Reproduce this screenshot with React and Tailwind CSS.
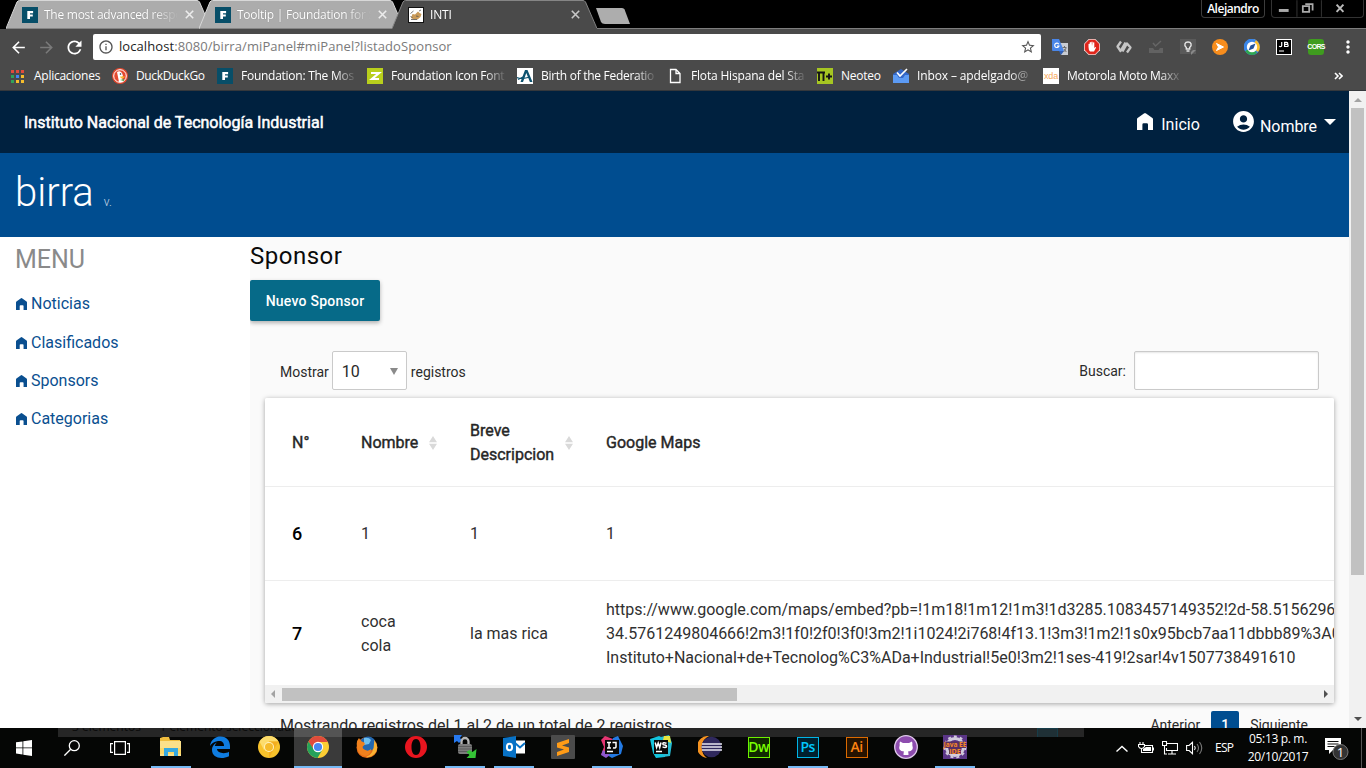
import React from "react";
import { MdAccountCircle, MdArrowBack, MdArrowForward, MdRefresh, MdInfoOutline, MdStarBorder, MdMoreVert } from "react-icons/md";

/* ---------- Shared glyphs ---------- */

function House({ className }) {
  return (
    <svg viewBox="0 0 16 17" className={className} fill="currentColor" preserveAspectRatio="none">
      <path d="M0 6.200Q0 5.500.6 5L7.300.3Q8 0 8.700.3L15.400 5Q16 5.500 16 6.200V17h-5v-5.500a1.200 1.200 0 0 0-1.200-1.200H6.600a1.200 1.200 0 0 0-1.200 1.200V17H0z" />
    </svg>
  );
}

function FoundationIcon() {
  return (
    <svg viewBox="0 0 16 16" className="size-4 shrink-0">
      <rect width="16" height="16" fill="#074e68" />
      <path d="M5.300 4h5.800v2.200H8v1.300h2.800v2.100H8V12H5.300z" fill="#fff" />
    </svg>
  );
}

/* ---------- Browser tabs ---------- */

function Tab({ icon, title, active, titleClass }) {
  return (
    <div className={active ? "relative z-10 flex h-[29px] w-[205px] shrink-0 items-center pl-4" : "relative -mr-3 flex h-[29px] w-[205px] shrink-0 items-center pl-4"}>
      <svg viewBox="0 0 205 29" className="absolute inset-0 h-[29px] w-[205px]">
        <path d="M0 29 11 2Q12 .5 13.500.5H191Q192.500.5 193.500 2L205 29z" fill={active ? "#4a4a4a" : "#acacac"} />
        <path d="M0 28.500 11 2Q12 .5 13.500.5H191Q192.500.5 193.500 2L205 28.500" fill="none" stroke={active ? "#858585" : "#d8d8d8"} />
        {!active && <path d="M1 28.500H204" stroke="#858585" />}
      </svg>
      <span className="relative">{icon}</span>
      <span className="relative ml-[6px] w-[140px] overflow-hidden whitespace-nowrap [mask-image:linear-gradient(90deg,#000_108px,transparent_134px)]">
        <span className={titleClass}>{title}</span>
      </span>
      <svg viewBox="0 0 9 9" className={active ? "relative ml-[1px] size-[9px] text-[#c8c8c8]" : "relative ml-[1px] size-[9px] text-[#ececec]"} fill="none" stroke="currentColor" strokeWidth="1.600">
        <path d="m.8.8 7.400 7.400M8.200.8.800 8.200" />
      </svg>
    </div>
  );
}

function TabStrip() {
  return (
    <div className="flex h-[29px] bg-black pl-[6px]">
      <Tab icon={<FoundationIcon />} title="The most advanced respo" titleClass="text-white [text-shadow:0_0_1px_#777] tracking-[-0.260px]" />
      <Tab icon={<FoundationIcon />} title="Tooltip | Foundation for S" titleClass="text-white [text-shadow:0_0_1px_#777] tracking-[-0.260px]" />
      <Tab
        active
        title="INTI"
        titleClass="text-white tracking-[-0.200px]"
        icon={
          <svg viewBox="0 0 16 16" className="size-4">
            <rect x=".5" y=".5" width="15" height="15" fill="#fff" stroke="#111" />
            <path d="M3 11 4.500 7 7 7.500 10 4.500l1.500 1.500 2 1-1 3-3 2.500H6z" fill="#c99a58" />
            <path d="M2.500 6.500 5.500 4M3 12.500h6M11 4l2-1M8 9l2.500.5M2.500 9.500l2 1" stroke="#555" strokeWidth=".8" />
          </svg>
        }
      />
      <div className="relative flex grow justify-between">
        <svg viewBox="0 0 36 18" className="-ml-[3px] mt-[7px] h-[18px] w-9">
          <path d="M2 1h26q2 0 2.600 1.500L36 17H11q-3 0-4-2z" fill="#adadad" />
        </svg>
        <div className="flex h-[18px] items-start">
          <div className="mr-[6px] flex h-[18px] w-[64px] items-center justify-center rounded-b border border-t-0 border-[#3c3c3c] text-[12px] font-semibold tracking-[-0.500px] text-white">Alejandro</div>
          <div className="mr-[2px] flex h-[18px] w-[93px] rounded-b border border-t-0 border-[#333]">
            <svg viewBox="0 0 93 18" className="h-[18px] w-[93px]" fill="none">
              <path d="M25.500 0v17M50.500 0v17" stroke="#333" />
              <path d="M7 10.500h10" stroke="#aaa" strokeWidth="3" />
              <path d="M33 4.500h7.500V11M30.500 6.500h6.500v6h-6.500z" stroke="#aaa" strokeWidth="1.800" transform="translate(1 -.5)" />
              <path d="m66 4.500 7 7.500M73 4.500l-7 7.500" stroke="#bbb" strokeWidth="2" />
            </svg>
          </div>
        </div>
        <div className="absolute bottom-0 left-0 h-px w-full bg-[#7d7d7d]" />
      </div>
    </div>
  );
}

/* ---------- Address bar ---------- */

const extensions = [
  <svg key="translate" viewBox="0 0 16 16" className="size-4">
    <path d="M7 4h9v12H9z" fill="#c9ccd2" />
    <path d="M0 0h7l5 12H1a1 1 0 0 1-1-1z" fill="#4a86e8" />
    <path d="M7 12h5l-3 4z" fill="#2f5fb8" />
    <path d="M6.800 5.200A2.200 2.200 0 1 0 7 7H5" fill="none" stroke="#fff" strokeWidth="1.100" />
    <path d="M10.500 8.500h4M12.500 7v1.500M14 9c-.500 2-1.500 3-2.500 4M12 10l2.300 3" stroke="#666" strokeWidth=".9" fill="none" />
  </svg>,
  <svg key="block" viewBox="0 0 16 16" className="size-4">
    <path d="M4.700 0h6.600L16 4.700v6.600L11.300 16H4.700L0 11.300V4.700z" fill="#f3d9d7" />
    <path d="M5 .8h6L15.200 5v6L11 15.200H5L.8 11V5z" fill="#e0251b" />
    <path d="M4.500 8V5q.8-.7 1.200 0v2.500V3.500q.8-.8 1.300 0V7l.3-4q.8-.8 1.300 0V7l.5-3.500q.8-.6 1.200 0V9l1.200-1q.8 0 .5.700L10 12.500H6Q4.500 11 4.500 8z" fill="#fff" />
  </svg>,
  <svg key="waves" viewBox="0 0 16 16" className="size-4" fill="none" stroke="#c6c6c6" strokeWidth="2.300" strokeLinejoin="round">
    <path d="M5 2.500 1.500 7.500 4.500 12 9.500 3.500M6.500 12.500 11 4.500l3.500 4L11 13.500" />
  </svg>,
  <svg key="inbox" viewBox="0 0 16 16" className="size-4">
    <path d="M1 9h4l1.500 2h4L12 9h3v5H1z" fill="#626262" />
    <path d="m5 4 2.500 3L13 2" fill="none" stroke="#666" strokeWidth="1.500" />
  </svg>,
  <svg key="bulb" viewBox="0 0 16 16" className="size-4">
    <rect x="0" y="0" width="16" height="15" fill="#5a5a5a" />
    <path d="M6.300 10V8.500C3.500 6 5 3 8 3s4.500 3 1.700 5.500V10zM6.500 12h3" stroke="#e8e8e8" strokeWidth="1.400" fill="none" />
    <path d="m16 11-5 5v-3l2-2z" fill="#888" />
  </svg>,
  <svg key="arrow" viewBox="0 0 16 16" className="size-4">
    <circle cx="8" cy="8" r="8" fill="#f78d1d" />
    <path d="m4.500 4.500 7 3.500-7 3.500 2-3.500z" fill="#fff" stroke="#fff" />
  </svg>,
  <svg key="compass" viewBox="0 0 16 16" className="size-4">
    <circle cx="8" cy="8" r="8" fill="#3a86e8" />
    <path d="M8 0a8 8 0 0 1 6 13L8 8z" fill="#fbc02d" />
    <path d="M1 12a8 8 0 0 0 12 2L8 8z" fill="#2fa84f" />
    <path d="M12 1A8 8 0 0 0 1 12l7-4z" fill="#3a86e8" />
    <circle cx="8" cy="8" r="5.200" fill="#fff" />
    <path d="m4.500 11.500 2-5 5-2-2 5z" fill="#20529b" />
  </svg>,
  <svg key="jb" viewBox="0 0 16 16" className="size-4">
    <rect x=".5" y=".5" width="15" height="15" fill="#000" stroke="#fff" />
    <path d="M5.700 3v3.500q0 1.200-1.200 1.200-.9 0-1.300-.7M8.600 3.400h2q1.200 0 1.200 1t-1.200 1h-2 2.400q1.200 0 1.200 1.100T11 7.500H8.600zM3 12h5" fill="none" stroke="#fff" strokeWidth="1.200" />
  </svg>,
  <div key="cors" className="flex size-4 items-center justify-center rounded-[3px] bg-[#3f9c1f] font-['Liberation_Sans',sans-serif] text-[7px] font-bold leading-4 tracking-[-0.700px] text-white">CORS</div>,
];

function Toolbar() {
  return (
    <div className="flex h-[36px] items-center bg-[#4a4a4a] pl-[9px] text-white">
      <MdArrowBack className="size-[19px]" />
      <MdArrowForward className="ml-[9px] size-[19px] text-[#7a7a7a]" />
      <MdRefresh className="ml-[8px] mr-[8px] size-[21px]" />
      <div className="flex h-[26px] w-[948px] items-center rounded-[2px] bg-white pl-[5px] text-[#555]">
        <MdInfoOutline className="size-4" />
        <span className="ml-[5px] grow text-[13px] tracking-[0.080px] text-[#7a7a7a]">
          <span className="text-[#1c1c1c]">localhost</span>:8080/birra/miPanel#miPanel?listadoSponsor
        </span>
        <MdStarBorder className="mr-[5px] size-4" />
      </div>
      <div className="ml-[11px] flex gap-4">{extensions}</div>
      <MdMoreVert className="ml-[14px] size-5" />
    </div>
  );
}

/* ---------- Bookmarks ---------- */

function Bookmark({ icon, label, boxClass, textClass }) {
  return (
    <div className={boxClass}>
      {icon}
      <span className={textClass}>{label}</span>
    </div>
  );
}

const appsColors = ["#e24a3b", "#e24a3b", "#e24a3b", "#2fa35a", "#4285f4", "#f6bd2c", "#2fa35a", "#f6bd2c", "#f6bd2c"];

function Bookmarks() {
  return (
    <div className="flex h-[26px] items-center border-b border-[#35383c] bg-[#4a4a4a] pl-[11px] pb-[5px] pt-[2px] text-white">
      <Bookmark
        boxClass="flex w-[101px] shrink-0 items-center"
        textClass="ml-[10px] whitespace-nowrap tracking-[-0.260px]"
        label="Aplicaciones"
        icon={
          <svg viewBox="0 0 13 13" className="size-[13px] shrink-0">
            {appsColors.map((c, i) => (
              <rect key={i} x={(i % 3) * 5} y={Math.floor(i / 3) * 5} width="3" height="3" fill={c} />
            ))}
          </svg>
        }
      />
      <Bookmark
        boxClass="flex w-[105px] shrink-0 items-center"
        textClass="ml-2 whitespace-nowrap tracking-[-0.350px]"
        label="DuckDuckGo"
        icon={
          <svg viewBox="0 0 16 16" className="size-4 shrink-0">
            <circle cx="8" cy="8" r="8" fill="#e5492f" />
            <circle cx="8" cy="8" r="6.300" fill="none" stroke="#fff" strokeWidth="1" />
            <path d="M5 4q3-2 5 1l1 3-1 1 1 5H7z" fill="#fff" />
            <path d="M8 8.500h5q-1 2-4 2z" fill="#fbc02d" />
            <path d="m8 12 4 1v-2z" fill="#4caf50" />
            <circle cx="8.500" cy="6" r=".8" fill="#234" />
          </svg>
        }
      />
      <Bookmark boxClass="flex w-[150px] shrink-0 items-center" textClass="ml-2 w-[116px] overflow-hidden whitespace-nowrap tracking-[-0.260px] [mask-image:linear-gradient(90deg,#000_94px,transparent_116px)]" label="Foundation: The Mos" icon={<FoundationIcon />} />
      <Bookmark
        boxClass="flex w-[150px] shrink-0 items-center"
        textClass="ml-2 w-[116px] overflow-hidden whitespace-nowrap tracking-[-0.290px] [mask-image:linear-gradient(90deg,#000_94px,transparent_116px)]"
        label="Foundation Icon Font"
        icon={
          <svg viewBox="0 0 16 16" className="size-4 shrink-0">
            <rect width="16" height="16" fill="#b9cf1c" />
            <path d="M4 5h8L5 11h7" fill="none" stroke="#fff" strokeWidth="2.200" />
          </svg>
        }
      />
      <Bookmark
        boxClass="flex w-[150px] shrink-0 items-center"
        textClass="ml-2 w-[116px] overflow-hidden whitespace-nowrap tracking-[-0.290px] [mask-image:linear-gradient(90deg,#000_94px,transparent_116px)]"
        label="Birth of the Federatio"
        icon={
          <svg viewBox="0 0 16 16" className="size-4 shrink-0">
            <rect width="16" height="16" fill="#fff" />
            <path d="m3.500 14 4.500-12h2.500l5 12h-2.600L9.300 5 6 14z" fill="#0d5370" />
            <path d="M0 9.500q5 2 13-.5M1 11.500 6 9" stroke="#0d5370" strokeWidth="1.300" fill="none" />
          </svg>
        }
      />
      <Bookmark
        boxClass="flex w-[150px] shrink-0 items-center"
        textClass="ml-2 w-[116px] overflow-hidden whitespace-nowrap tracking-[-0.180px] [mask-image:linear-gradient(90deg,#000_94px,transparent_116px)]"
        label="Flota Hispana del Sta"
        icon={
          <svg viewBox="0 0 16 16" className="size-4 shrink-0" fill="none" stroke="#fff" strokeWidth="1.300">
            <path d="M3.500 1.500h5.500l4 4v9H3.500zM9 1.500v4h4" />
          </svg>
        }
      />
      <Bookmark
        boxClass="flex w-[76px] shrink-0 items-center"
        textClass="ml-2 whitespace-nowrap tracking-[-0.260px]"
        label="Neoteo"
        icon={
          <svg viewBox="0 0 16 16" className="size-4 shrink-0">
            <rect width="16" height="16" fill="#a6c622" />
            <path d="M2 13V4.500h4.500V13M0 4.500h8M9 8.500h6M12 5.500v6" fill="none" stroke="#151515" strokeWidth="1.900" />
          </svg>
        }
      />
      <Bookmark
        boxClass="flex w-[150px] shrink-0 items-center"
        textClass="ml-2 w-[118px] overflow-hidden whitespace-nowrap tracking-[-0.130px] [mask-image:linear-gradient(90deg,#000_92px,transparent_118px)]"
        label="Inbox – apdelgado@"
        icon={
          <svg viewBox="0 0 16 16" className="size-4 shrink-0">
            <path d="m0 6 8-5 8 5v9H0z" fill="#3367c8" />
            <path d="M0 7h4l2 3h4l2-3h4v8H0z" fill="#5c9bf5" />
            <path d="m4 4.500 3 3.500 7-7" fill="none" stroke="#fff" strokeWidth="1.700" />
          </svg>
        }
      />
      <Bookmark
        boxClass="flex w-[150px] shrink-0 items-center"
        textClass="ml-2 w-[118px] overflow-hidden whitespace-nowrap tracking-[-0.290px] [mask-image:linear-gradient(90deg,#000_92px,transparent_116px)]"
        label="Motorola Moto Maxx"
        icon={<div className="flex size-4 shrink-0 items-center justify-center bg-white font-['Liberation_Sans',sans-serif] text-[9px] leading-4 tracking-[-0.200px] text-[#f7a85b]">xda</div>}
      />
      <svg viewBox="0 0 9 8" className="ml-auto mr-[23px] h-2 w-[9px]" fill="none" stroke="#fff" strokeWidth="1.600">
        <path d="m1 1 3 3-3 3M5 1l3 3-3 3" />
      </svg>
    </div>
  );
}

/* ---------- Page ---------- */

function SiteHeader() {
  return (
    <header>
      <div className="flex h-[62px] items-center bg-[#00213f] pl-6 pr-[13px] text-white">
        <span className="mt-[2px] grow text-[16px] [-webkit-text-stroke:0.500px_#fff]">Instituto Nacional de Tecnología Industrial</span>
        <House className="mb-[1px] h-[17px] w-4" />
        <span className="ml-[8px] mt-[5px] text-[16px] tracking-[0.050px]">Inicio</span>
        <MdAccountCircle className="ml-[31px] mb-px size-[25px]" />
        <span className="ml-[4px] mt-[9px] text-[16px] tracking-[-0.050px]">Nombre</span>
        <svg viewBox="0 0 12 6" className="ml-[7px] h-[6px] w-3">
          <path d="M0 0h12L6 6z" fill="#fff" />
        </svg>
      </div>
      <div className="flex h-[84px] items-baseline bg-[#004d90] pl-[15px] pt-[12px] text-white">
        <span className="text-[40px] font-light leading-[56px]">birra</span>
        <span className="ml-[10px] text-[12px] font-light text-[#c9d8e6]">v.</span>
      </div>
    </header>
  );
}

const menu = ["Noticias", "Clasificados", "Sponsors", "Categorias"];

function Sidebar() {
  return (
    <nav className="w-[250px] shrink-0 bg-white pl-[15px]">
      <h2 className="mt-[5px] text-[25px] leading-[35px] text-[#8a8a8a]">MENU</h2>
      <ul className="mt-[8px] text-[16px] text-[#0a4f90]">
        {menu.map((m) => (
          <li key={m} className="flex h-[38.400px] items-center pl-px">
            <House className="h-3 w-[11px]" />
            <span className="ml-1">{m}</span>
          </li>
        ))}
      </ul>
    </nav>
  );
}

function SortArrows({ className }) {
  return (
    <svg viewBox="0 0 8 14" className={className} fill="#d9d9d9">
      <path d="M4 0l4 6.200H0zM4 14l4-6.200H0z" />
    </svg>
  );
}

const rowGrid = "grid grid-cols-[69px_109px_136px_760px] items-center pl-[27px]";

function SponsorTable() {
  return (
    <div className="h-[305px] w-[1069px] overflow-hidden rounded-[2px] bg-white text-[16px] leading-6 text-[#303030]">
      <div className={rowGrid + " h-[88px] pt-[2px] text-[#262626] [-webkit-text-stroke:0.400px_#262626]"}>
        <span>N°</span>
        <span className="flex items-center">Nombre<SortArrows className="ml-[11px] h-[14px] w-2" /></span>
        <span className="flex items-center">
          <span className="w-[84px]">Breve Descripcion</span>
          <SortArrows className="ml-[11px] h-[14px] w-2" />
        </span>
        <span>Google Maps</span>
      </div>
      <div className={rowGrid + " h-[94px] border-t border-[#ededed]"}>
        <span className="text-[18px] font-medium text-black">6</span>
        <span>1</span>
        <span>1</span>
        <span>1</span>
      </div>
      <div className={rowGrid + " h-[105px] border-t border-[#ededed] pt-px"}>
        <span className="text-[18px] font-medium text-black">7</span>
        <span className="w-10 pt-px">coca cola</span>
        <span className="pt-px">la mas rica</span>
        <span className="whitespace-nowrap pt-px">
          https://www.google.com/maps/embed?pb=!1m18!1m12!1m3!1d3285.1083457149352!2d-58.5156296
          <br />
          34.5761249804666!2m3!1f0!2f0!3f0!3m2!1i1024!2i768!4f13.1!3m3!1m2!1s0x95bcb7aa11dbbb89%3A0
          <br />
          Instituto+Nacional+de+Tecnolog%C3%ADa+Industrial!5e0!3m2!1ses-419!2sar!4v1507738491610
        </span>
      </div>
      <div className="flex h-[18px] items-center bg-[#f1f1f1] px-[6px]">
        <svg viewBox="0 0 4 8" className="h-2 w-1"><path d="M4 0v8L0 4z" fill="#a3a3a3" /></svg>
        <div className="ml-[7px] h-[13px] w-[455px] bg-[#c1c1c1]" />
        <svg viewBox="0 0 4 8" className="ml-auto h-2 w-1"><path d="M0 0v8l4-4z" fill="#505050" /></svg>
      </div>
    </div>
  );
}

function Content() {
  return (
    <main className="flex grow flex-col overflow-hidden bg-[#fafafa] text-[#2a2a2a]">
      <h1 className="mt-px text-[24px] leading-9 tracking-[0.500px] text-[#0a0a0a]">Sponsor</h1>
      <button className="mt-[6px] h-[41px] w-[130px] shrink-0 rounded-[2px] bg-[#066a88] pt-[2px] text-[14px] font-medium tracking-[0.240px] text-white shadow-[0_2px_4px_rgba(0,0,0,0.3)]">Nuevo Sponsor</button>
      <div className="mt-[30px] flex h-[39px] shrink-0 items-center pl-[30px] pr-[30px] text-[14px]">
        <span className="mt-[4px]">Mostrar</span>
        <div className="ml-[3px] flex h-[39px] w-[75px] items-center justify-between rounded-[2px] border border-[#cacaca] bg-white pl-[9px] pr-[8px] pt-[2px] text-[16px]">
          10
          <svg viewBox="0 0 8 7" className="h-[7px] w-2"><path d="M0 0h8L4 7z" fill="#8a8a8a" /></svg>
        </div>
        <span className="ml-1 mt-[4px]">registros</span>
        <span className="ml-auto mt-[2px]">Buscar:</span>
        <div className="ml-2 h-[39px] w-[185px] rounded-[2px] border border-[#cacaca] bg-white shadow-[inset_0_1px_2px_rgba(10,10,10,0.1)]" />
      </div>
      <div className="ml-[15px] mt-2 w-[1069px] rounded-[2px] shadow-[0_1px_5px_rgba(0,0,0,0.35)]">
        <SponsorTable />
      </div>
      <div className="mt-2 flex h-10 shrink-0 items-start pl-[30px] pr-[41px]">
        <span className="mt-[3px] text-[16px]">Mostrando registros del 1 al 2 de un total de 2 registros</span>
        <div className="ml-auto flex items-center text-[14px]">
          <span className="pt-px">Anterior</span>
          <span className="mx-[11px] flex h-[27px] w-7 items-center justify-center rounded-[2px] bg-[#004d90] pt-[2px] font-medium text-white">1</span>
          <span className="pt-px">Siguiente</span>
        </div>
      </div>
    </main>
  );
}

function PageScrollbar() {
  return (
    <div className="flex w-[17px] shrink-0 flex-col items-center bg-[#f1f1f1]">
      <svg viewBox="0 0 8 4" className="mt-[7px] h-1 w-2"><path d="M0 4h8L4 0z" fill="#a3a3a3" /></svg>
      <div className="mt-[6px] h-[467px] w-[13px] bg-[#c1c1c1]" />
      <svg viewBox="0 0 8 4" className="mb-[7px] mt-auto h-1 w-2"><path d="M0 0h8L4 4z" fill="#505050" /></svg>
    </div>
  );
}

/* ---------- Taskbar ---------- */

function AdobeIcon({ label, className }) {
  return <div className={"flex h-[21px] w-[22px] items-center justify-center border-[1.500px] text-[14px] font-semibold leading-none tracking-[-0.700px] " + className}>{label}</div>;
}

const tasks = [
  {
    bar: "w-10",
    icon: (
      <svg viewBox="0 0 24 22" className="h-[22px] w-6">
        <path d="M1 2 4 1h6l1 3h10v3H1z" fill="#f0bd3e" />
        <path d="M1 5h21v15H1z" fill="#fce08a" />
        <path d="M1 12h21v6H1z" fill="#fbd667" />
        <path d="M5 12h14v8h-4v-4H9v4H5z" fill="#36a8e0" />
      </svg>
    ),
  },
  {
    icon: (
      <svg viewBox="0 0 22 22" className="size-[22px]">
        <path d="M1 10C2 3 7 .5 11.500.5 18 .5 21 5 21 10v3H8c.3 4 7.500 5.500 12 2.700v4.500C12 24 3 21.500 3 14c0-4 2.500-6.500 5-7.500-1.200 1-2 2.500-2.200 3.500H15C15 5.500 12 4.500 9 5 5 5.600 2.500 7.500 1 10z" fill="#0f7ce0" fillRule="evenodd" />
        <path d="M8 9.500h6.500Q14 7 11 7T8 9.500z" fill="#050505" />
      </svg>
    ),
  },
  {
    icon: (
      <svg viewBox="0 0 22 22" className="size-[22px]">
        <circle cx="11" cy="11" r="11" fill="#f8c22b" />
        <path d="M11 5.500h9.500A11 11 0 0 0 1.500 5.500L6 14z" fill="#fddc6c" />
        <path d="m11 22 5-9 4.500-7.500H11z" fill="#f4ae20" />
        <circle cx="11" cy="11" r="5" fill="#fff1bc" />
        <circle cx="11" cy="11" r="4" fill="#f6bb2a" />
      </svg>
    ),
  },
  {
    bar: "w-12",
    active: true,
    icon: (
      <svg viewBox="0 0 22 22" className="size-[22px]">
        <circle cx="11" cy="11" r="11" fill="#fccd33" />
        <path d="M11 6h9.800A11 11 0 0 0 1.500 5.500L6.500 14z" fill="#df4b3c" />
        <path d="M1.500 5.500A11 11 0 0 0 10.500 22l5-8.500-9-.5z" fill="#25a15b" />
        <circle cx="11" cy="11" r="5.200" fill="#fff" />
        <circle cx="11" cy="11" r="4.100" fill="#4787f2" />
      </svg>
    ),
  },
  {
    icon: (
      <svg viewBox="0 0 22 22" className="size-[22px]">
        <circle cx="11" cy="11.500" r="10.500" fill="#e66b16" />
        <path d="M5 3.500Q12-2 18 3q4 7-2 11-6 3-10-2z" fill="#2468b0" />
        <path d="M8 2q5-1 7 2l-2 4-5 1z" fill="#6fc0ef" />
        <path d="M.7 8Q1 4 3 2q1 3 4 4 3 1 1 3.500-2 .5-1 3 4 4 8 .5 0 6-6 7-8-1-8.300-12z" fill="#f0811d" />
        <path d="M18 4q5 6 2 12-4 6-10 5 9-3 8-17z" fill="#f9b233" />
      </svg>
    ),
  },
  {
    icon: (
      <svg viewBox="0 0 22 22" className="size-[22px]">
        <path d="M11 0a11 11 0 1 0 0 22 11 11 0 0 0 0-22zm0 3c3 0 4.500 3.500 4.500 8S14 19 11 19s-4.500-3.500-4.500-8S8 3 11 3z" fill="#e8151f" fillRule="evenodd" />
      </svg>
    ),
  },
  {
    bar: "w-10",
    icon: (
      <svg viewBox="0 0 24 24" className="size-6">
        <path d="M1 0h8L7 3l2 2-3 3-2-2-3 2z" fill="#2779ef" />
        <path d="M8.500 10V6.500a3.500 3.500 0 0 1 7 0V10" fill="none" stroke="#b5b5b5" strokeWidth="2.300" />
        <rect x="5" y="9" width="14" height="10" rx="2" fill="#7d7d7d" />
        <path d="M5 11.500h14M5 14h14M5 16.500h14" stroke="#5c5c5c" />
        <path d="m23.500 14-1 9h-9l3-3-3-3 3-2 3 2z" fill="#35c336" />
      </svg>
    ),
  },
  {
    bar: "w-10",
    icon: (
      <svg viewBox="0 0 24 24" className="size-6">
        <path d="M12 5.500h11v13H12z" fill="#fff" />
        <path d="m13 8 5 4.500L23 8" fill="none" stroke="#0872c6" strokeWidth="2" />
        <path d="m1 3 13-2v22L1 21z" fill="#0872c6" />
        <ellipse cx="7.500" cy="12" rx="2.600" ry="3.300" fill="none" stroke="#fff" strokeWidth="2" />
      </svg>
    ),
  },
  {
    icon: (
      <svg viewBox="0 0 24 24" className="size-6">
        <rect width="24" height="24" rx="1" fill="#4b4b4b" />
        <path d="m6 8 12-4v4L11 10.500l7 2V17L6 21v-4l7-2.500-7-2z" fill="#ff9b16" />
      </svg>
    ),
  },
  {
    bar: "w-10",
    icon: (
      <svg viewBox="0 0 24 24" className="size-6">
        <path d="M1 5 5 1l8 3-4 10-8 6 3-8z" fill="#e43572" />
        <path d="m13 3 5-2 5 10-2 8-9 4-5-3z" fill="#237ae4" />
        <path d="m3 15-2 5 5 3 4-3z" fill="#9058ce" />
        <path d="M5 5h14v14H5z" fill="#080808" />
        <path d="M7 7.500h4M9 7.500V13M7 13h4M12.500 7.500H16V12q-.5 1.500-3 .7M7 16.500h6" fill="none" stroke="#fff" strokeWidth="1.500" />
      </svg>
    ),
  },
  {
    icon: (
      <svg viewBox="0 0 24 24" className="size-6">
        <path d="m1 4 9-3 6 3v18l-9 1-3-5z" fill="#13c4dd" />
        <path d="m12 2 8-2 3 8-2 13-7 1z" fill="#26bbd2" />
        <path d="m15 1 6 0 1 7-8-3z" fill="#e9e63e" />
        <path d="M5 5h14v14H5z" fill="#080808" />
        <path d="m6.200 7.500 1.400 5L9.200 8l1.500 4.500L12 7.500M17.500 8.300q-3.700-1.200-3.700.6 0 1 2 1.200 2 .3 1.700 1.500-.7 1.500-4 .3M7 16.500h6" fill="none" stroke="#fff" strokeWidth="1.500" />
      </svg>
    ),
  },
  {
    icon: (
      <svg viewBox="0 0 24 22" className="h-[22px] w-6">
        <path d="M11 0A11 11 0 0 0 9 22Q3 18 4 9q1-6 7-9z" fill="#f59220" />
        <ellipse cx="13.500" cy="11" rx="10" ry="10.300" fill="#30295e" />
        <path d="M4 8h20M3.500 11h21M4 14h20" stroke="#e8e6f1" strokeWidth="1.500" />
      </svg>
    ),
  },
  { icon: <AdobeIcon label="Dw" className="border-[#6df000] bg-[#102800] text-[#79ff00]" /> },
  { bar: "w-10", icon: <AdobeIcon label="Ps" className="border-[#00b4e6] bg-[#00202e] text-[#00c8ff]" /> },
  { icon: <AdobeIcon label="Ai" className="border-[#dc6a00] bg-[#261300] text-[#ff8410]" /> },
  {
    icon: (
      <svg viewBox="0 0 24 24" className="size-6">
        <circle cx="12" cy="12" r="11.300" fill="#8d4cae" stroke="#dfc9ea" strokeWidth="1.300" />
        <path d="M6 6.500 9 8h6l3-1.500q.7 2 .3 3.500 2 6-4.300 6.500.5.500.5 3.500h-5q0-3 .5-3.500Q3.700 16 5.700 10 5.300 8.500 6 6.500z" fill="#fff" />
      </svg>
    ),
  },
  {
    bar: "w-10",
    icon: (
      <svg viewBox="0 0 24 24" className="size-6">
        <rect width="24" height="24" fill="#5b3687" />
        <circle cx="12" cy="12" r="8.500" fill="none" stroke="#d2ccdc" strokeWidth="3" />
        <circle cx="12" cy="12" r="10.500" fill="none" stroke="#d2ccdc" strokeWidth="2" strokeDasharray="3 3" />
        <path d="M1 6.500h22v6.500H1zM6 13h12v6H6z" fill="#5a2f62" />
        <text x="12" y="12" fontSize="7" fontWeight="700" textAnchor="middle" fill="#f58a28" textLength="23" lengthAdjust="spacingAndGlyphs">Java EE</text>
        <text x="12" y="18.500" fontSize="7" fontWeight="700" textAnchor="middle" fill="#f58a28">IDE</text>
      </svg>
    ),
  },
];

function Taskbar() {
  return (
    <footer className="relative flex h-10 bg-[#050605] text-white">
      <div className="absolute left-[58px] top-0 flex h-[9px] w-[1026px] overflow-hidden bg-[#262626]">
        <span className="-mt-[9px] ml-[14px] whitespace-pre text-[12px] leading-4 text-[#0b0b0b]">3 elementos      1 elemento seleccionado</span>
        <div className="ml-auto mr-[26px] size-[21px] border border-[#173d49] bg-[#1f3036]" />
      </div>
      <div className="relative flex w-12 items-center justify-center">
        <svg viewBox="0 0 16 16" className="size-4" fill="#fff"><path d="M0 2.300 6.500 1.400v6.100H0zM7.300 1.300 16 0v7.500H7.300zM0 8.300h6.500v6.200L0 13.600zM7.300 8.300H16V16l-8.700-1.300z" /></svg>
      </div>
      <div className="relative flex w-12 items-center justify-center">
        <svg viewBox="0 0 16 16" className="size-4" fill="none" stroke="#fff" strokeWidth="1.300"><circle cx="10.300" cy="5.700" r="5" /><path d="M6.700 9.300.4 15.600" /></svg>
      </div>
      <div className="relative mr-[2px] flex w-12 items-center justify-center">
        <svg viewBox="0 0 20 14" className="h-[14px] w-5" fill="none" stroke="#fff" strokeWidth="1.200"><path d="M4.600.6h10.800v12.800H4.600zM3 2.600H.6v8.800H3M17 2.600h2.400v8.800H17" /></svg>
      </div>
      {tasks.map((t, i) => (
        <div key={i} className="relative flex w-[49px] justify-center">
          <div className={t.active ? "flex w-12 flex-col items-center [background:linear-gradient(#545454_9px,#3a3a3a_9px)]" : "flex w-12 flex-col items-center"}>
            <div className="flex h-[38px] items-center">{t.icon}</div>
            {t.bar && <div className={"h-[2px] bg-[#76b9f5] " + t.bar} />}
          </div>
        </div>
      ))}
      <div className="relative ml-auto flex items-center">
        <svg viewBox="0 0 12 7" className="h-[7px] w-3" fill="none" stroke="#fff" strokeWidth="1.400"><path d="m.5 6.500 5.500-5 5.500 5" /></svg>
        <svg viewBox="0 0 16 12" className="ml-[10px] h-3 w-4" fill="none" stroke="#fff" strokeWidth="1.100"><path d="M2 0v2M5 0v2M.5 2.500h6v2q-1 2-3 2t-3-2zM3.500 6.500v4H14.500v-7H7M15.500 5.500v3" /><path d="M8 5h5v4H5V7z" fill="#fff" stroke="none" /></svg>
        <svg viewBox="0 0 16 14" className="ml-2 h-[14px] w-4" fill="none" stroke="#fff" strokeWidth="1.100"><path d="M5 2.500h10.500v7H4.500V7M10 9.500v3M6 13h8M.5.5h4v4h-4zM2.500 4.500V13H5" /></svg>
        <svg viewBox="0 0 17 14" className="ml-2 h-[14px] w-[17px]" fill="none" stroke="#fff" strokeWidth="1.100"><path d="M.6 4.500h2.500L6.500 1.300v11.400L3.100 9.500H.6zM8.500 5q1.500 2 0 4" /><path d="M11 3q3 4 0 8M13.500 1q4.500 6 0 12" stroke="#777" /></svg>
        <span className="ml-[12px] w-[19px] text-[12px] tracking-[-0.700px]">ESP</span>
        <div className="ml-[14px] flex w-[60px] flex-col items-center whitespace-nowrap text-[12px] leading-[18px] tracking-[-0.330px]">
          <span>05:13 p. m.</span>
          <span>20/10/2017</span>
        </div>
        <div className="relative ml-[17px] mr-[12px] size-6">
          <svg viewBox="0 0 24 24" className="size-6">
            <path d="M0 2h16v12H8l-4 4v-4H0z" fill="#fff" />
            <path d="M2.500 5.500h11M2.500 8h11M2.500 10.500h7" stroke="#111" strokeWidth="1.100" />
            <circle cx="15.500" cy="16" r="7.500" fill="#333" stroke="#777" />
          </svg>
          <span className="absolute left-[8px] top-[8px] w-[15px] text-center text-[13px] leading-[17px]">1</span>
        </div>
        <div className="h-10 w-px bg-[#555]" />
        <div className="w-[4px]" />
      </div>
    </footer>
  );
}

export default function App() {
  return (
    <div className="flex h-screen w-full flex-col overflow-hidden bg-white font-['Open_Sans','Noto_Sans',sans-serif] text-[12px]">
      <TabStrip />
      <Toolbar />
      <Bookmarks />
      <div className="flex h-[637px] shrink-0 overflow-hidden font-['Roboto',sans-serif]">
        <div className="flex min-w-0 grow flex-col">
          <SiteHeader />
          <div className="flex min-h-0 grow overflow-hidden">
            <Sidebar />
            <Content />
          </div>
        </div>
        <PageScrollbar />
      </div>
      <Taskbar />
    </div>
  );
}
